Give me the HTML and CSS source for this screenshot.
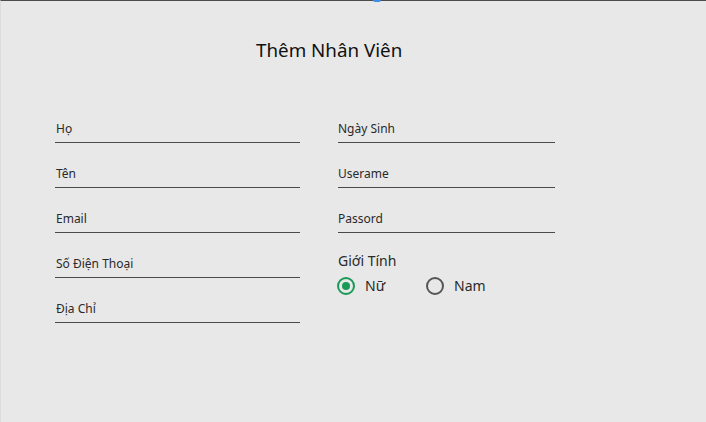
FILE: index.html
```html
<!DOCTYPE html>
<html lang="vi">
<head>
<meta charset="utf-8">
<link rel="stylesheet" href="styles.css">
</head>
<body>
<div class="window">
  <div class="topbar"><span class="marker"></span></div>
  <h1 class="title">Thêm Nhân Viên</h1>
  <div class="form">
    <div class="col col-left">
      <div class="field"><span class="label">Họ</span></div>
      <div class="field"><span class="label">Tên</span></div>
      <div class="field"><span class="label">Email</span></div>
      <div class="field"><span class="label">Số Điện Thoại</span></div>
      <div class="field"><span class="label">Địa Chỉ</span></div>
    </div>
    <div class="col col-right">
      <div class="field"><span class="label">Ngày Sinh</span></div>
      <div class="field"><span class="label">Userame</span></div>
      <div class="field"><span class="label">Passord</span></div>
      <div class="gender">
        <div class="gender-label">Giới Tính</div>
        <div class="radios">
          <label class="radio checked"><span class="dot"></span><span class="rtext">Nữ</span></label>
          <label class="radio"><span class="dot"></span><span class="rtext">Nam</span></label>
        </div>
      </div>
    </div>
  </div>
</div>
</body>
</html>
```
FILE: styles.css
```css
* { box-sizing: border-box; }
html, body {
  margin: 0;
  padding: 0;
  width: 706px;
  height: 422px;
  overflow: hidden;
  background: #e8e8e8;
  font-family: "Noto Sans", "Open Sans", sans-serif;
  color: #1e1e1e;
}
.window {
  position: relative;
  height: 422px;
  border-top: 1px solid #4b4b4b;
  border-left: 1px solid #dcdcdc;
}
.topbar { height: 0; }
.marker {
  position: absolute;
  top: -1px;
  left: 372px;
  width: 8px;
  height: 2px;
  background: #3d8ee8;
  border-radius: 0 0 2px 2px;
}
.title {
  margin: 37px 0 0 255px;
  font-size: 18.8px;
  line-height: 24px;
  font-weight: 400;
  color: #111;
}
.form {
  display: flex;
  gap: 38px;
  margin: 36px 0 0 54px;
}
.col { display: flex; flex-direction: column; }
.col-left { width: 245px; }
.col-right { width: 217px; }
.field {
  height: 45px;
  display: flex;
  align-items: flex-end;
  border-bottom: 1px solid #4a4a4a;
  padding: 0 0 5px 1px;
}
.col-right .field { padding-left: 0; }
.label {
  font-size: 12px;
  line-height: 16px;
  color: #2a2a2a;
}
.gender { padding-top: 19px; margin-left: -1px; }
.gender-label {
  font-size: 14px;
  line-height: 18px;
  color: #2a2a2a;
  padding-left: 1px;
}
.radios {
  display: flex;
  margin-top: 7px;
}
.radio {
  display: flex;
  align-items: center;
  width: 89px;
}
.dot {
  width: 18px;
  height: 18px;
  border-radius: 50%;
  border: 2px solid #555;
  margin-right: 10px;
  position: relative;
}
.radio.checked .dot {
  border-color: #1a9a58;
}
.radio.checked .dot::after {
  content: "";
  position: absolute;
  left: 3px;
  top: 3px;
  width: 8px;
  height: 8px;
  border-radius: 50%;
  background: #1a9a58;
}
.rtext {
  font-size: 14px;
  line-height: 18px;
  color: #2a2a2a;
}
```
